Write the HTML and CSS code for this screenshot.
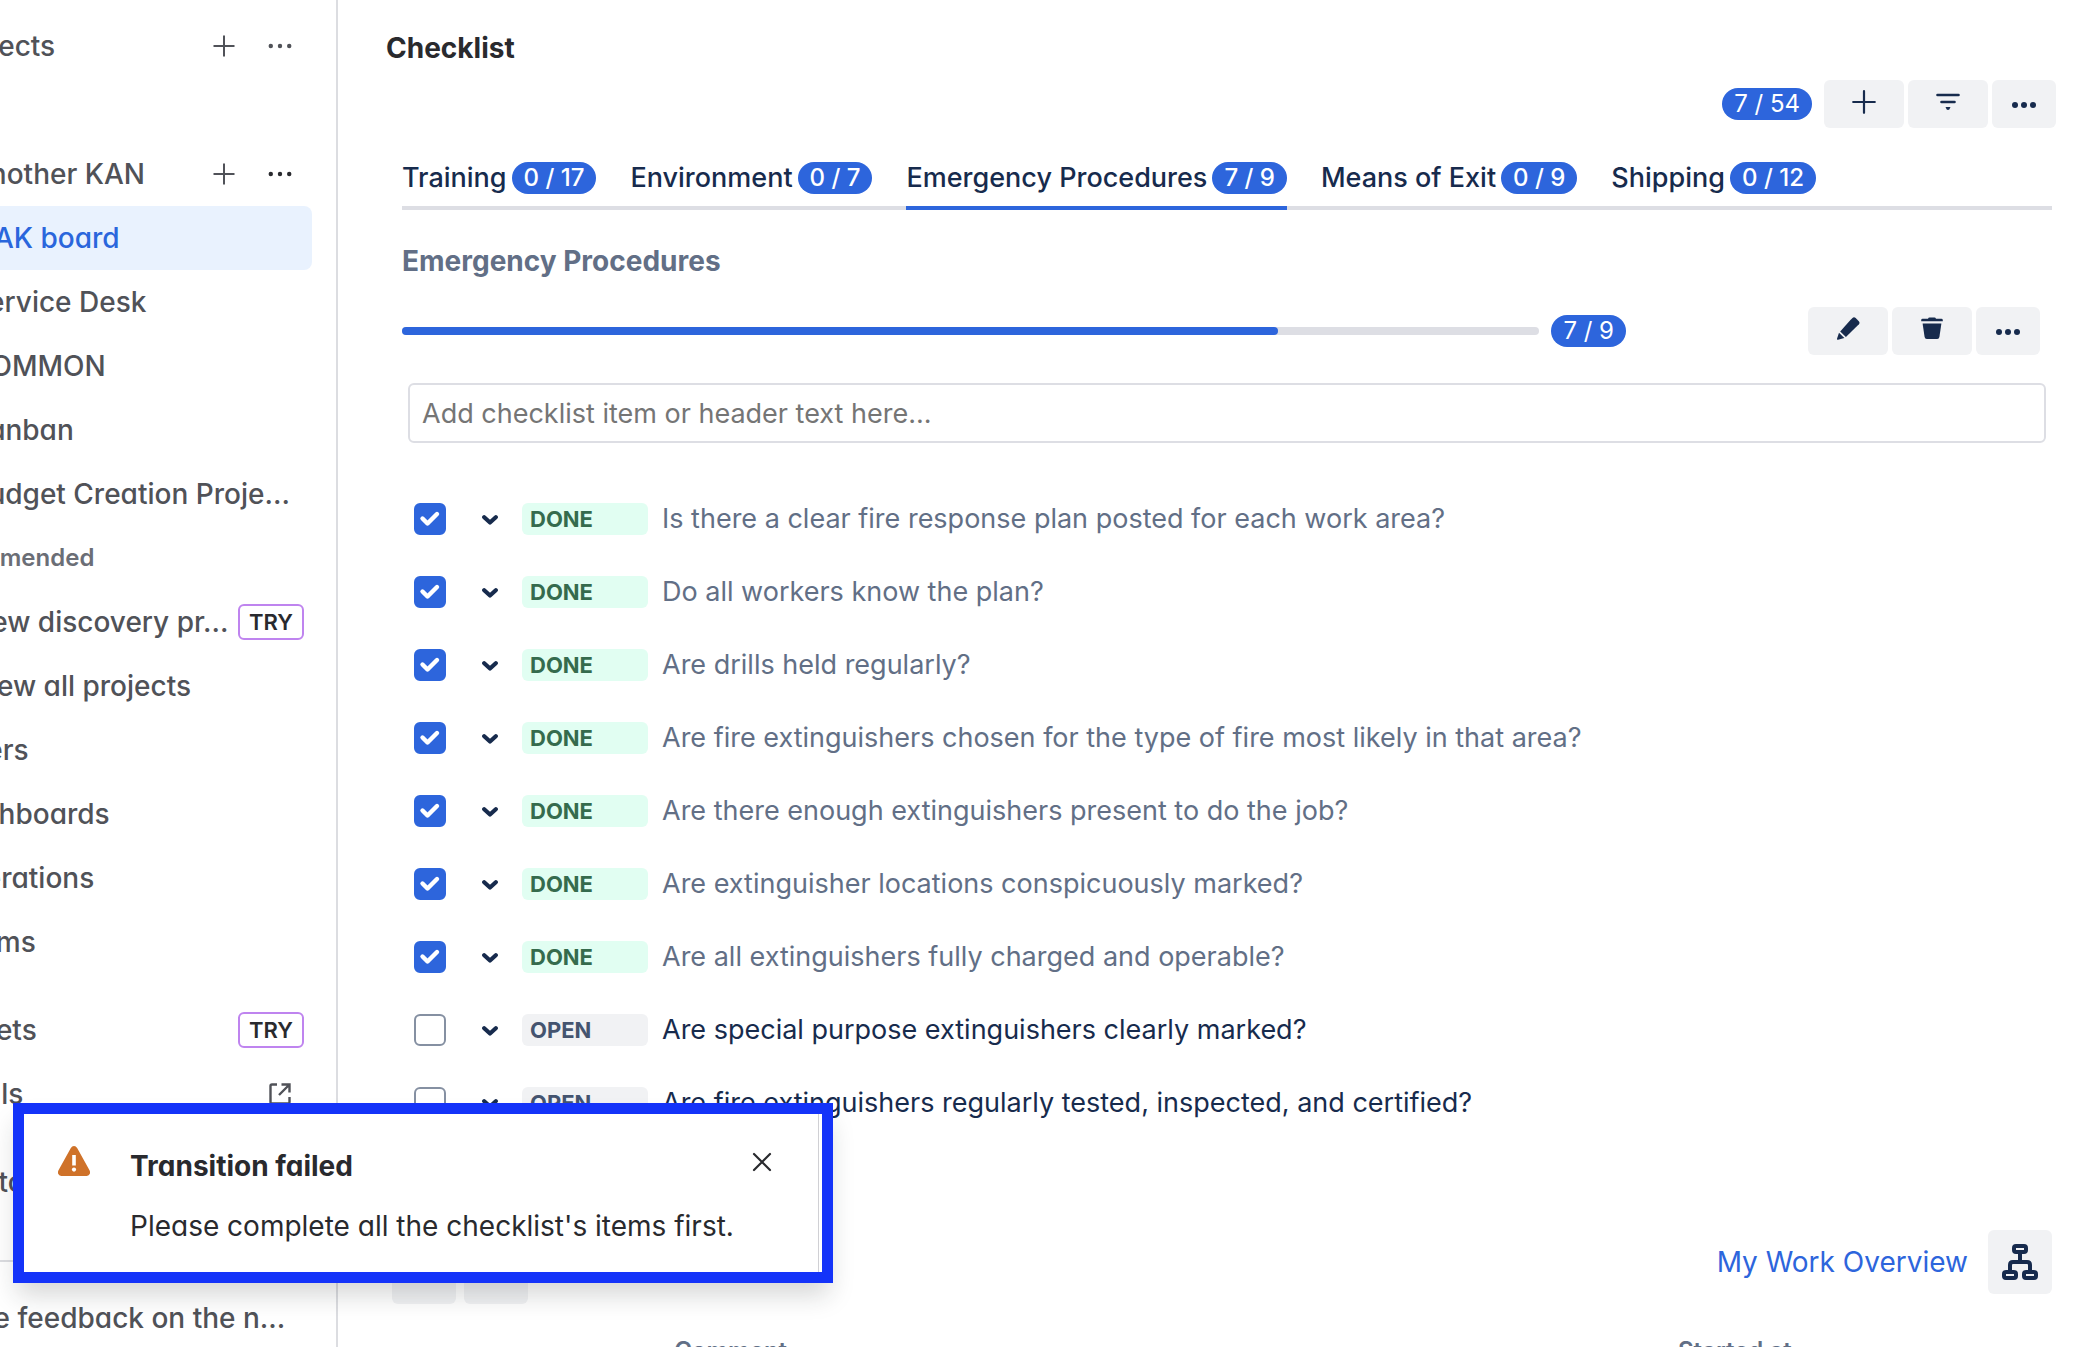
FILE: index.html
```html
<!DOCTYPE html>
<html lang="en">
<head>
<meta charset="utf-8">
<title>Checklist</title>
<link rel="stylesheet" href="styles.css">
</head>
<body>
<svg class="sprite" aria-hidden="true">
  <symbol id="plus" viewBox="0 0 24 24"><path d="M12 1.5v21M1.5 12h21" fill="none" stroke="currentColor" stroke-width="2"/></symbol>
  <symbol id="plus-round" viewBox="0 0 24 24"><path d="M12 1.200v21.600M1.200 12h21.600" fill="none" stroke="currentColor" stroke-width="2.200" stroke-linecap="round"/></symbol>
  <symbol id="dots" viewBox="0 0 26 26"><g fill="currentColor"><circle cx="3" cy="13" r="2.400"/><circle cx="13" cy="13" r="2.400"/><circle cx="23" cy="13" r="2.400"/></g></symbol>
  <symbol id="dots-bold" viewBox="0 0 24 24"><g fill="currentColor"><circle cx="3" cy="13" r="3"/><circle cx="12" cy="13" r="3"/><circle cx="21" cy="13" r="3"/></g></symbol>
  <symbol id="filter" viewBox="0 0 24 24"><path d="M1.500 5h21M5.500 12h13" fill="none" stroke="currentColor" stroke-width="2.600" stroke-linecap="round"/><path d="M9.500 17h5l-1.200 2.500q-1.300.8-2.600 0z" fill="currentColor"/></symbol>
  <symbol id="pencil" viewBox="0 0 24 24"><g fill="currentColor"><path d="M14.200 3.200 16.500.9q1.600-1.300 3.200.2l3.100 3.100q1.400 1.500.1 3.100l-13 12.800-5.700-5.700z"/><path d="M3 15.700 8.400 21 2 22.800q-1.300.2-1-1z"/></g></symbol>
  <symbol id="trash" viewBox="0 0 24 24"><g fill="currentColor"><path d="M1.200 3.200q0-1.400 1.400-1.400H8q.4-1.200 1.500-1.200h5q1.100 0 1.500 1.200h5.400q1.400 0 1.400 1.400v1H1.200z"/><path d="M2.600 6.400h18.800L19.400 20q-.3 2-2.200 2H6.800q-1.900 0-2.200-2z"/></g></symbol>
  <symbol id="chevron" viewBox="0 0 16 16"><path d="m2.200 6.200 5.800 5.300 5.800-5.300" fill="none" stroke="currentColor" stroke-width="4.200" stroke-linecap="round" stroke-linejoin="round"/></symbol>
  <symbol id="external" viewBox="0 0 24 24"><path d="M9 2.500H4Q2.500 2.500 2.500 4v16q0 1.500 1.500 1.500h16q1.500 0 1.500-1.500v-5M13.500 2.500h8v8M21 3 11 13" fill="none" stroke="currentColor" stroke-width="2.400"/></symbol>
  <symbol id="warning" viewBox="0 0 32 30"><path d="M12.700 2.300q1.300-2.300 3.300-2.300t3.300 2.300l12.200 22q1.200 2.500 0 4-.9 1.700-3 1.700h-25q-2.100 0-3-1.700-1.200-1.500 0-4z" fill="#cf7229"/><path d="M14.200 9h3.600v10.500h-3.600z" fill="#fff"/><circle cx="16" cy="23.600" r="2.100" fill="#fff"/></symbol>
  <symbol id="close" viewBox="0 0 24 24"><path d="m4 4 16 16M20 4 4 20" fill="none" stroke="currentColor" stroke-width="2.200" stroke-linecap="round"/></symbol>
  <symbol id="tree" viewBox="0 0 36 36"><path d="M18 10v8M8 26v-5q0-3 3-3h14q3 0 3 3v5" fill="none" stroke="currentColor" stroke-width="4"/><g fill="#f1f2f4" stroke="currentColor" stroke-width="4"><rect x="12" y="2" width="12" height="6" rx="2"/><rect x="2" y="28" width="12" height="6" rx="2"/><rect x="22" y="28" width="12" height="6" rx="2"/></g></symbol>
</svg>

<div class="app">
  <nav class="sidebar" aria-label="Projects">
    <div class="nav-row"><a href="#">Projects</a><button aria-label="Create project"><svg><use href="#plus"/></svg></button><button aria-label="More"><svg><use href="#dots"/></svg></button></div>
    <div class="nav-row nested after-list"><a href="#">Another KAN</a><button aria-label="Create"><svg><use href="#plus"/></svg></button><button class="dark" aria-label="More"><svg><use href="#dots"/></svg></button></div>
    <div class="nav-row nested selected"><a href="#">SAK board</a></div>
    <div class="nav-row nested"><a href="#">Service Desk</a></div>
    <div class="nav-row nested"><a href="#">COMMON</a></div>
    <div class="nav-row nested"><a href="#">Kanban</a></div>
    <div class="nav-row nested"><a href="#">Budget Creation Proje...</a></div>
    <h2 class="nav-row nav-heading">Recommended</h2>
    <div class="nav-row nested"><a href="#">New discovery pr...</a><span class="try">TRY</span></div>
    <div class="nav-row nested"><a href="#">View all projects</a></div>
    <div class="nav-row"><a href="#">Filters</a></div>
    <div class="nav-row"><a href="#">Dashboards</a></div>
    <div class="nav-row"><a href="#">Operations</a></div>
    <div class="nav-row"><a href="#">Teams</a></div>
    <div class="nav-row group"><a href="#">Assets</a><span class="try">TRY</span></div>
    <div class="nav-row"><a href="#">Goals</a><span class="nav-icon"><svg><use href="#external"/></svg></span></div>
    <div class="nav-row group"><a href="#">Customize</a></div>
    <div class="nav-footer"><div class="nav-row"><a href="#">Give feedback on the n...</a></div></div>
  </nav>

  <main class="main">
    <h1 class="title">Checklist</h1>
    <div class="toolbar">
      <span class="count">7 / 54</span>
      <div class="buttons">
        <button class="btn" aria-label="Add checklist"><svg><use href="#plus-round"/></svg></button>
        <button class="btn" aria-label="Filter"><svg><use href="#filter"/></svg></button>
        <button class="btn narrow" aria-label="More"><svg><use href="#dots-bold"/></svg></button>
      </div>
    </div>

    <section class="checklist">
      <div class="tabs" role="tablist">
        <button class="tab" role="tab">Training<span class="count">0 / 17</span></button>
        <button class="tab" role="tab">Environment<span class="count">0 / 7</span></button>
        <button class="tab active" role="tab" aria-selected="true">Emergency Procedures<span class="count">7 / 9</span></button>
        <button class="tab" role="tab">Means of Exit<span class="count">0 / 9</span></button>
        <button class="tab" role="tab">Shipping<span class="count">0 / 12</span></button>
      </div>

      <h2 class="heading">Emergency Procedures</h2>
      <div class="progress-row">
        <div class="track"><div class="fill" style="width: 77%"></div></div>
        <span class="count">7 / 9</span>
        <div class="buttons">
          <button class="btn" aria-label="Edit"><svg><use href="#pencil"/></svg></button>
          <button class="btn" aria-label="Delete"><svg><use href="#trash"/></svg></button>
          <button class="btn narrow" aria-label="More"><svg><use href="#dots-bold"/></svg></button>
        </div>
      </div>

      <input class="add-item" type="text" aria-label="New item" placeholder="Add checklist item or header text here...">

      <ul class="items">
        <li class="item done"><input type="checkbox" id="i1" checked><button class="expand" aria-label="Status menu"><svg><use href="#chevron"/></svg></button><span class="status">DONE</span><label for="i1">Is there a clear fire response plan posted for each work area?</label></li>
        <li class="item done"><input type="checkbox" id="i2" checked><button class="expand" aria-label="Status menu"><svg><use href="#chevron"/></svg></button><span class="status">DONE</span><label for="i2">Do all workers know the plan?</label></li>
        <li class="item done"><input type="checkbox" id="i3" checked><button class="expand" aria-label="Status menu"><svg><use href="#chevron"/></svg></button><span class="status">DONE</span><label for="i3">Are drills held regularly?</label></li>
        <li class="item done"><input type="checkbox" id="i4" checked><button class="expand" aria-label="Status menu"><svg><use href="#chevron"/></svg></button><span class="status">DONE</span><label for="i4">Are fire extinguishers chosen for the type of fire most likely in that area?</label></li>
        <li class="item done"><input type="checkbox" id="i5" checked><button class="expand" aria-label="Status menu"><svg><use href="#chevron"/></svg></button><span class="status">DONE</span><label for="i5">Are there enough extinguishers present to do the job?</label></li>
        <li class="item done"><input type="checkbox" id="i6" checked><button class="expand" aria-label="Status menu"><svg><use href="#chevron"/></svg></button><span class="status">DONE</span><label for="i6">Are extinguisher locations conspicuously marked?</label></li>
        <li class="item done"><input type="checkbox" id="i7" checked><button class="expand" aria-label="Status menu"><svg><use href="#chevron"/></svg></button><span class="status">DONE</span><label for="i7">Are all extinguishers fully charged and operable?</label></li>
        <li class="item"><input type="checkbox" id="i8"><button class="expand" aria-label="Status menu"><svg><use href="#chevron"/></svg></button><span class="status">OPEN</span><label for="i8">Are special purpose extinguishers clearly marked?</label></li>
        <li class="item"><input type="checkbox" id="i9"><button class="expand" aria-label="Status menu"><svg><use href="#chevron"/></svg></button><span class="status">OPEN</span><label for="i9">Are fire extinguishers regularly tested, inspected, and certified?</label></li>
      </ul>
    </section>

    <section class="worklog">
      <div class="worklog-bar">
        <button class="tile low" aria-label="Previous"></button>
        <button class="tile low" aria-label="Next"></button>
        <a class="overview" href="#">My Work Overview</a>
        <button class="tile" aria-label="Hierarchy"><svg><use href="#tree"/></svg></button>
      </div>
      <table class="worklog-table">
        <thead><tr><th class="spacer"></th><th>Comment</th><th class="started">Started at</th></tr></thead>
      </table>
    </section>
  </main>
</div>

<div class="toast" role="alert">
  <div class="toast-card">
    <svg class="toast-icon"><use href="#warning"/></svg>
    <div class="toast-text"><strong>Transition failed</strong><p>Please complete all the checklist's items first.</p></div>
    <button class="toast-close" aria-label="Dismiss"><svg><use href="#close"/></svg></button>
  </div>
</div>
</body>
</html>
```
FILE: styles.css
```css
* { box-sizing: border-box; }

body {
  margin: 0;
  background: #fff;
  color: #172b4d;
  font: 400 28px/32px Inter, "Liberation Sans", sans-serif;
}

h1, h2, p, ul { margin: 0; padding: 0; font-size: inherit; }
button { border: 0; padding: 0; background: none; font: inherit; color: inherit; }
a { color: inherit; text-decoration: none; }
svg { display: block; width: 24px; height: 24px; }
.sprite { position: absolute; width: 0; height: 0; }

.app { display: flex; height: 100vh; overflow: hidden; }

/* Sidebar, scrolled partly out of view on the left */
.sidebar {
  flex: none;
  width: 458px;
  margin-left: -120px;
  padding-top: 14px;
  border-right: 2px solid #dcdde1;
  color: #505258;
  font-weight: 500;
  font-feature-settings: "cv11";
}
.nav-row {
  display: flex;
  align-items: center;
  gap: 8px;
  height: 64px;
  margin-right: 24px;
  padding: 0 8px 0 66px;
  border-radius: 8px;
  white-space: nowrap;
}
.nav-row a { flex: 1; min-width: 0; }
.nested { padding-left: 90px; }
.selected { padding-left: 96px; background: #e9f2fe; color: #2a66dc; }
.after-list { margin-top: 64px; }
.group { margin-top: 24px; }
.nav-heading { padding-left: 40px; font-size: 24px; font-weight: 600; color: #6b6e76; }
.nav-row button, .nav-icon { display: grid; place-items: center; width: 48px; height: 48px; }
.dark { color: #292a2e; }
.try {
  padding: 0 9px;
  border: 2px solid #bf84ef;
  border-radius: 6px;
  font-size: 22px;
  font-weight: 600;
  color: #292a2e;
}
.nav-footer { margin-top: 46px; padding: 24px 0 0 4px; border-top: 2px solid #dcdde1; }

/* Main column */
.main { flex: 1; min-width: 0; padding-top: 32px; }
.title { padding-left: 48px; font-weight: 700; color: #292a2e; }
.toolbar {
  display: flex;
  justify-content: flex-end;
  align-items: center;
  gap: 12px;
  margin-top: 16px;
  padding-right: 26px;
}
.count {
  padding: 0 12px;
  border-radius: 16px;
  background: #2d65dc;
  color: #fff;
  font-size: 24px;
  white-space: nowrap;
}
.buttons { display: flex; gap: 4px; }
.btn {
  display: grid;
  place-items: center;
  width: 80px;
  height: 48px;
  padding-bottom: 4px;
  border-radius: 6px;
  background: #f1f2f4;
}
.narrow { width: 64px; padding-bottom: 0; }

.checklist { padding: 34px 30px 0 64px; }
.tabs {
  display: flex;
  gap: 34px;
  background: linear-gradient(#dddee4, #dddee4) bottom / 100% 4px no-repeat;
}
.tab {
  display: flex;
  gap: 5px;
  padding-bottom: 12px;
  border-bottom: 4px solid transparent;
  font-size: 27px;
  font-weight: 500;
  white-space: nowrap;
}
.active { border-color: #2d65dc; }
.heading { margin-top: 35px; font-weight: 700; color: #626f86; }

.progress-row { display: flex; align-items: center; gap: 12px; margin: 30px 12px 0 0; }
.progress-row .buttons { margin-left: 170px; }
.track { flex: 1; height: 8px; border-radius: 4px; background: #dddee4; }
.fill { height: 8px; border-radius: 4px; background: #2d65dc; }

.add-item {
  display: block;
  width: calc(100% - 12px);
  height: 60px;
  margin: 28px 6px 0;
  padding: 0 12px;
  border: 2px solid #dddee4;
  border-radius: 6px;
  font: inherit;
  font-size: 27px;
}
.add-item::placeholder { color: #757575; }

.items { margin-top: 39px; list-style: none; font-size: 27px; }
.item { display: flex; align-items: center; height: 73px; padding-left: 12px; }
.item input {
  appearance: none;
  width: 32px;
  height: 32px;
  margin: 0;
  border: 2px solid #8590a2;
  border-radius: 6px;
}
.item input:checked {
  border-color: #2d65dc;
  background: #2d65dc url("data:image/svg+xml,%3Csvg xmlns='http://www.w3.org/2000/svg' viewBox='0 0 28 28'%3E%3Cpath d='M6.500 13.500l5 5L21 9' fill='none' stroke='white' stroke-width='4.400' stroke-linecap='round' stroke-linejoin='round'/%3E%3C/svg%3E");
}
.expand { margin: 0 24px 0 36px; }
.expand svg { width: 16px; height: 16px; }
.status {
  width: 126px;
  margin-right: 14px;
  padding-left: 8px;
  border-radius: 6px;
  background: #f1f2f4;
  color: #44546f;
  font-size: 22px;
  font-weight: 700;
}
.done .status { background: #e1fef2; color: #356b4d; }
.done label { color: #626f86; }

.worklog { padding: 91px 30px 0 54px; }
.worklog-bar { display: flex; gap: 8px; }
.tile { display: grid; place-items: center; width: 64px; height: 64px; border-radius: 6px; background: #f1f2f4; }
.tile svg { width: 36px; height: 36px; }
.low { margin-top: 10px; }
.overview { margin: 16px 12px 0 auto; color: #2d65dc; }
.worklog-table { width: 100%; margin-top: 31px; border-collapse: collapse; table-layout: fixed; color: #626f86; font-size: 24px; text-align: left; }
.worklog-table th { padding: 0; font-weight: 600; }
.spacer { width: 17%; }
.started { width: 374px; }

/* Notification over the page */
.toast {
  position: absolute;
  left: 13px;
  bottom: 64px;
  width: 820px;
  border: 11px solid #1433f9;
  background: #fff;
  box-shadow: 0 16px 24px -4px rgba(30, 31, 33, .18);
  color: #292a2e;
  font-feature-settings: "cv11";
}
.toast-card {
  display: flex;
  align-items: flex-start;
  margin-right: 3px;
  padding: 32px 32px 30px 34px;
  border-right: 1px solid #d0d0d4;
}
.toast-icon { width: 32px; height: 30px; }
.toast-text { flex: 1; padding: 4px 0 0 40px; }
.toast-text strong { font-weight: 700; }
.toast-text p { margin-top: 28px; }
.toast-close { margin: 4px 12px 0 0; }
```
